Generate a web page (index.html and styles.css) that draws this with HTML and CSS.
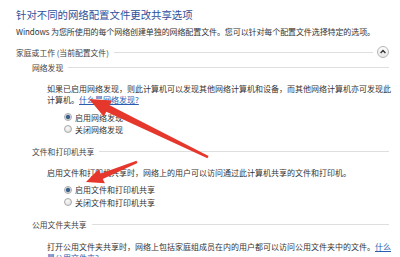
FILE: index.html
```html
<!DOCTYPE html>
<html lang="zh-CN">
<head>
  <meta charset="UTF-8" />
  <title>高级共享设置</title>
  <link rel="stylesheet" href="styles.css">
</head>
<body>

  <div class="page">
    <h1 class="title">针对不同的网络配置文件更改共享选项</h1>
    <p class="intro">Windows 为您所使用的每个网络创建单独的网络配置文件。您可以针对每个配置文件选择特定的选项。</p>

    <!-- 当前配置文件 -->
    <div class="profile-head">
      <span>家庭或工作 (当前配置文件)</span>
      <span class="rule"></span>
      <span class="toggle">
        <svg width="12" height="12" viewBox="0 0 12 12">
          <polyline points="3.6,7 6,4.6 8.4,7" fill="none" stroke="#333" stroke-width="1.4"/>
        </svg>
      </span>
    </div>

    <div class="section">
      <div class="section-head"><span>网络发现</span><span class="rule"></span></div>
      <p class="desc">如果已启用网络发现，则此计算机可以发现其他网络计算机和设备，而其他网络计算机亦可发现此<br>计算机。<a href="#">什么是网络发现?</a></p>
      <div class="options">
        <div class="option"><span class="radio checked"></span>启用网络发现</div>
        <div class="option"><span class="radio"></span>关闭网络发现</div>
      </div>
    </div>

    <div class="section">
      <div class="section-head"><span>文件和打印机共享</span><span class="rule"></span></div>
      <p class="desc">启用文件和打印机共享时，网络上的用户可以访问通过此计算机共享的文件和打印机。</p>
      <div class="options tight">
        <div class="option"><span class="radio checked"></span>启用文件和打印机共享</div>
        <div class="option"><span class="radio"></span>关闭文件和打印机共享</div>
      </div>
    </div>

    <div class="section">
      <div class="section-head"><span>公用文件夹共享</span><span class="rule"></span></div>
      <p class="desc">打开公用文件夹共享时，网络上包括家庭组成员在内的用户都可以访问公用文件夹中的文件。<a href="#">什么<br>是公用文件夹?</a></p>
    </div>

    <!-- 标注箭头 -->
    <svg class="marks" width="400" height="257" viewBox="0 0 400 257">
      <polygon fill="#e6372d" points="89,99 112,100.5 109.6,105.2 208.6,156 207.4,158.2 106.3,111.7 103.8,116.6"/>
      <polygon fill="#e6372d" points="86,182 98.6,169.3 100.7,173.6 136.5,160.8 137.5,163 102.8,178.9 104.9,183.2"/>
    </svg>
  </div>

</body>
</html>
```

FILE: styles.css
```css
body { margin: 0; background: #fff; font-family: "Noto Sans CJK SC", "Noto Sans", sans-serif; color: #333; }
.page { position: relative; width: 400px; height: 257px; overflow: hidden; padding: 8px 11px 0 16px; box-sizing: border-box; }
.title { margin: 0; font-size: 10.4px; line-height: 14px; font-weight: normal; color: #2d4f9a; }
.intro { margin: 4px 0 0; font-size: 8px; line-height: 12px; letter-spacing: -0.1px; white-space: nowrap; }
.rule { flex: 1; height: 1px; background: #dedede; margin-left: 5px; }
.profile-head { display: flex; align-items: center; height: 14px; margin-top: 7px; font-size: 7.8px; color: #444; }
.profile-head .rule { margin-right: 4px; }
.toggle { width: 12px; height: 12px; border-radius: 50%; border: 1px solid #b5b5b5; box-sizing: border-box; background: linear-gradient(#fdfdfd, #e6e6e6); display: flex; align-items: center; justify-content: center; }
.toggle svg { display: block; margin: -1px; }
.section { padding-left: 16px; }
.section-head { display: flex; align-items: center; height: 12px; margin-top: 10px; font-size: 7.8px; color: #444; }
.profile-head + .section .section-head { margin-top: 2px; }
.desc { margin: 10px 0 0 15px; font-size: 8px; line-height: 11px; white-space: nowrap; }
.desc a { color: #2a5db0; }
.options { margin: 6px 0 0 32px; font-size: 8px; }
.options.tight { margin-top: 5.5px; }
.option { display: flex; align-items: center; height: 12px; }
.options.tight .option { height: 12.5px; }
.radio { width: 8px; height: 8px; border-radius: 50%; border: 1px solid #a9a9a9; box-sizing: border-box; background: radial-gradient(circle at 40% 35%, #fafafa, #d8d8d8); margin-right: 3px; }
.radio.checked { background: radial-gradient(circle, #3d5f8a 0 1.6px, #8aa2bd 2.2px, #f0f0f0 2.8px); }
.marks { position: absolute; left: 0; top: 0; }
```
